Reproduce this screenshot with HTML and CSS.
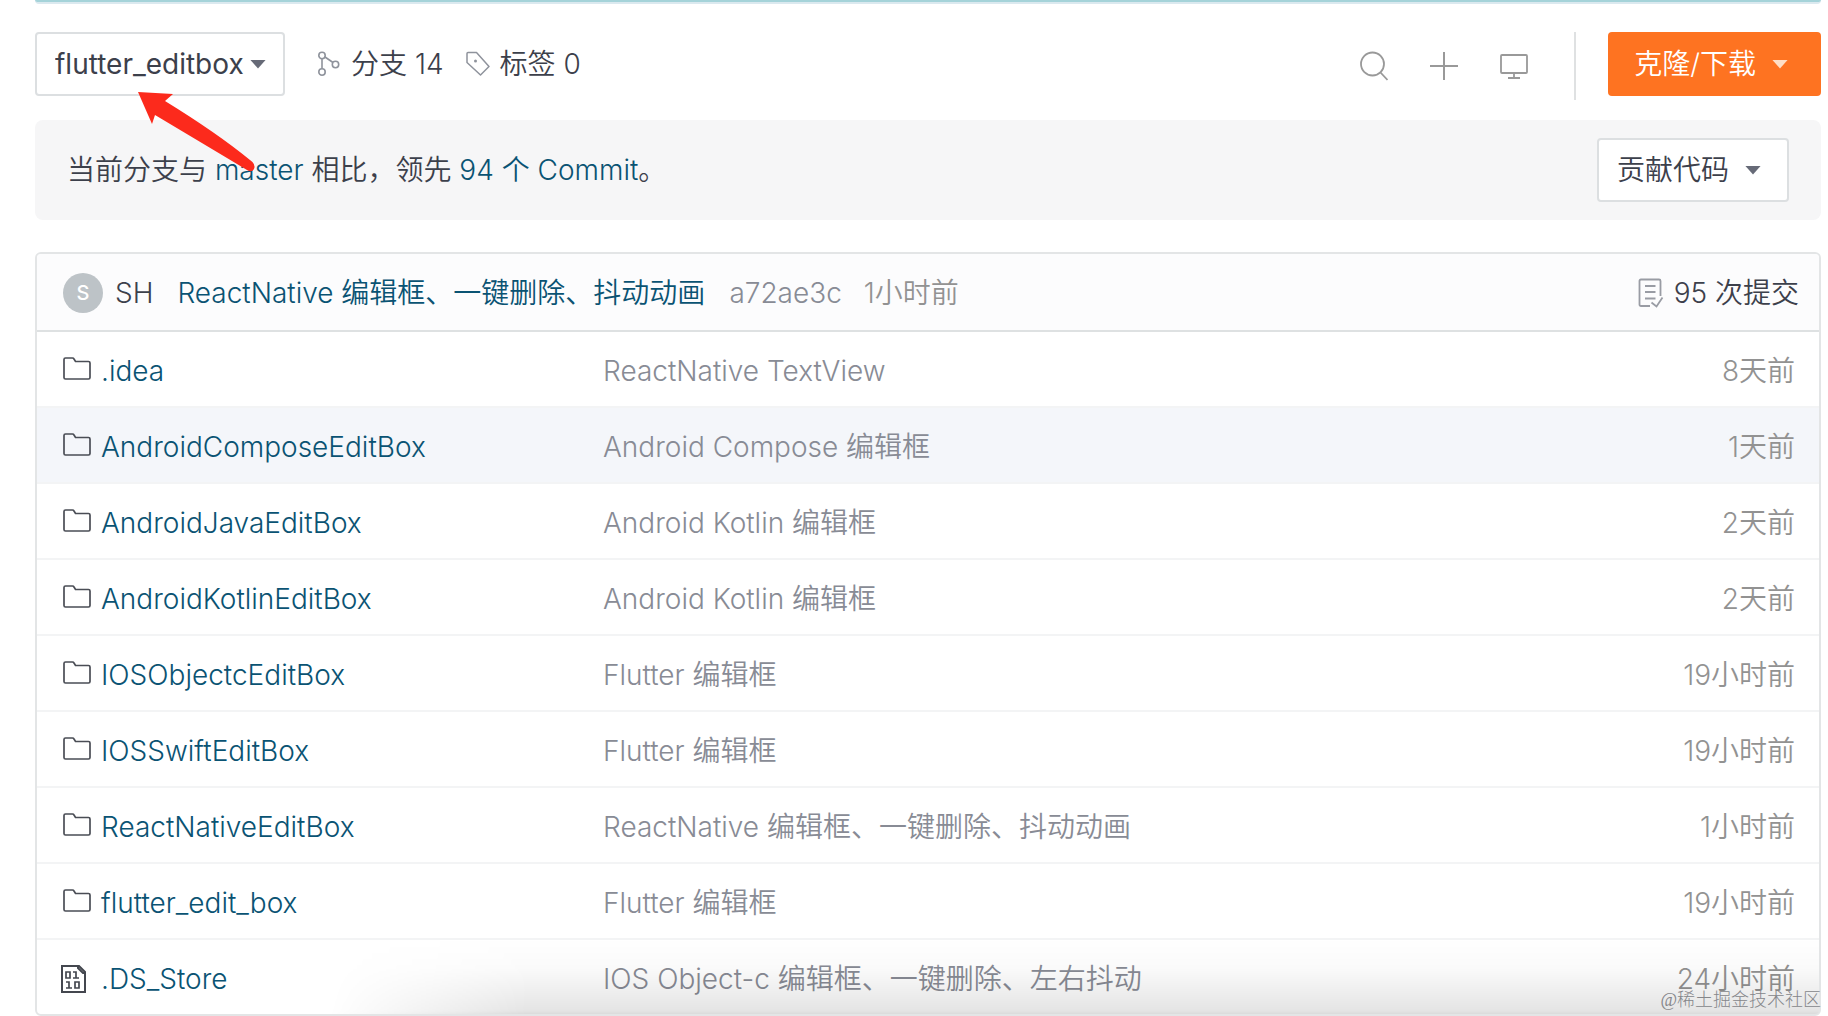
FILE: index.html
```html
<!DOCTYPE html>
<html lang="zh-CN">
<head>
<meta charset="utf-8">
<meta name="viewport" content="width=device-width, initial-scale=1">
<title>flutter_editbox</title>
<link rel="stylesheet" href="styles.css">
</head>
<body>
<svg class="sprite" aria-hidden="true">
  <symbol id="folder" viewBox="0 0 28 24"><path d="M1 20.500V2.500Q1 1 2.500 1H9.500Q10.500 1 11 2L12.500 4.500H25.500Q27 4.500 27 6V20.500Q27 22 25.500 22H2.500Q1 22 1 20.500Z" fill="none" stroke="#4a4d55" stroke-width="1.700"/></symbol>
</svg>
<div class="page">
  <div class="strip"></div>
  <header class="toolbar">
    <label class="branch">
      <select class="branch-select" aria-label="分支"><option>flutter_editbox</option></select>
      <span class="caret"></span>
    </label>
    <nav class="counts">
      <a class="count" href="#branches">
        <svg width="24" height="28" viewBox="0 0 24 28" fill="none" stroke="#8f939c" stroke-width="1.600"><circle cx="5" cy="5.500" r="3.200"/><circle cx="5" cy="22" r="3.200"/><circle cx="18.500" cy="14.500" r="3.200"/><path d="M5 9v9.500M8 7l8 5.500"/></svg>
        <span>分支 14</span>
      </a>
      <a class="count" href="#tags">
        <svg width="24" height="28" viewBox="0 0 24 28" fill="none" stroke="#8f939c" stroke-width="1.500"><path d="M1 3.500Q1 2.500 2 2.500H10.500L23 16.500L14.500 25L1 12.500Z" stroke-linejoin="round"/><circle cx="9.500" cy="11" r="1.500" fill="#8f939c" stroke="none"/></svg>
        <span>标签 0</span>
      </a>
    </nav>
    <div class="tools">
      <button class="tool" aria-label="搜索"><svg width="28" height="30" viewBox="0 0 28 30" fill="none" stroke="#999" stroke-width="1.800"><circle cx="12.500" cy="13" r="11.500"/><path d="M20.500 21.500L27.500 29"/></svg></button>
      <button class="tool" aria-label="新建"><svg width="28" height="30" viewBox="0 0 28 30" fill="none" stroke="#999" stroke-width="2"><path d="M0 15H28M14 1V29"/></svg></button>
      <button class="tool" aria-label="Web IDE"><svg width="28" height="30" viewBox="0 0 28 30" fill="none" stroke="#999" stroke-width="1.800"><rect x="1" y="4" width="26" height="18" rx="1"/><path d="M14 22v4.500M8 27H20"/></svg></button>
    </div>
    <span class="divider"></span>
    <button class="clone">克隆/下载<span class="caret"></span></button>
  </header>

  <section class="notice">
    <p class="notice-text">当前分支与 <a href="#master">master</a> 相比，领先 <a href="#compare">94 个 Commit</a>。</p>
    <button class="contribute">贡献代码<span class="caret"></span></button>
  </section>

  <section class="files">
    <div class="commit">
      <span class="avatar">S</span>
      <span class="author">SH</span>
      <a class="subject" href="#commit">ReactNative 编辑框、一键删除、抖动动画</a>
      <span class="hash">a72ae3c</span>
      <span class="age">1小时前</span>
      <a class="total" href="#commits">
        <svg width="26" height="30" viewBox="0 0 26 30" fill="none" stroke="#999ca4" stroke-width="1.800"><path d="M12 28H3Q1.500 28 1.500 26.500V3Q1.500 1.500 3 1.500H21Q22.500 1.500 22.500 3V18M7 8H17.500M7 14H17.500M7 20.500H17.500M13.500 24.500L18.500 28.500L24.500 19.500"/></svg>
        <span>95 次提交</span>
      </a>
    </div>
    <table class="tree">
      <colgroup><col class="col-name"><col class="col-message"><col class="col-age"></colgroup>
      <tbody>
        <tr><td><a class="entry" href="#f1"><svg class="icon"><use href="#folder"/></svg>.idea</a></td><td>ReactNative TextView</td><td>8天前</td></tr>
        <tr class="active"><td><a class="entry" href="#f2"><svg class="icon"><use href="#folder"/></svg>AndroidComposeEditBox</a></td><td>Android Compose 编辑框</td><td>1天前</td></tr>
        <tr><td><a class="entry" href="#f3"><svg class="icon"><use href="#folder"/></svg>AndroidJavaEditBox</a></td><td>Android Kotlin 编辑框</td><td>2天前</td></tr>
        <tr><td><a class="entry" href="#f4"><svg class="icon"><use href="#folder"/></svg>AndroidKotlinEditBox</a></td><td>Android Kotlin 编辑框</td><td>2天前</td></tr>
        <tr><td><a class="entry" href="#f5"><svg class="icon"><use href="#folder"/></svg>IOSObjectcEditBox</a></td><td>Flutter 编辑框</td><td>19小时前</td></tr>
        <tr><td><a class="entry" href="#f6"><svg class="icon"><use href="#folder"/></svg>IOSSwiftEditBox</a></td><td>Flutter 编辑框</td><td>19小时前</td></tr>
        <tr><td><a class="entry" href="#f7"><svg class="icon"><use href="#folder"/></svg>ReactNativeEditBox</a></td><td>ReactNative 编辑框、一键删除、抖动动画</td><td>1小时前</td></tr>
        <tr><td><a class="entry" href="#f8"><svg class="icon"><use href="#folder"/></svg>flutter_edit_box</a></td><td>Flutter 编辑框</td><td>19小时前</td></tr>
        <tr><td><a class="entry" href="#f9"><svg class="icon icon-file" viewBox="0 0 26 28" fill="none" stroke="#44474f"><path stroke-width="2" d="M1 1H18L24 7V27H1Z"/><path stroke-width="2" d="M17 1V3L22 8H24"/><path stroke-width="1.700" d="M5 7H9V13H5ZM12 7H15V13M12 13H18M5 17H8V23M5 23H11M14 17H18V23H14Z"/></svg>.DS_Store</a></td><td>IOS Object-c 编辑框、一键删除、左右抖动</td><td>24小时前</td></tr>
      </tbody>
    </table>
    <div class="shade"></div>
  </section>
  <svg class="arrow" width="120" height="84" viewBox="0 0 120 84" aria-hidden="true"><path d="M1 1L36 3L28 10Q80 42 113 69Q119 73 117 78Q115 82 110 79Q75 58 18 24L15 33Z" fill="#fc2a1c"/></svg>
  <span class="watermark">@稀土掘金技术社区</span>
</div>
</body>
</html>
```
FILE: styles.css
```css
* { box-sizing: border-box; }

body {
  margin: 0;
  background: #fff;
  color: #3c404b;
  font: 350 28px/40px Inter, "Noto Sans CJK SC", sans-serif;
}

a { color: inherit; text-decoration: none; }

button, select {
  margin: 0;
  font: inherit;
  color: inherit;
  cursor: pointer;
}

.sprite { position: absolute; width: 0; height: 0; }

.page { position: relative; padding: 0 7px 0 35px; }

.strip {
  height: 4px;
  background: #a5d3d9;
  border-bottom: 2px solid #dbe9ef;
  border-radius: 0 0 4px 4px;
}

.caret {
  width: 16px;
  height: 9px;
  background: #666a77;
  clip-path: polygon(0 0, 100% 0, 50% 100%);
}

.toolbar {
  display: flex;
  align-items: flex-start;
  margin-bottom: 20px;
  padding-top: 28px;
}

.branch {
  display: grid;
  align-items: center;
}

.branch > * { grid-area: 1 / 1; }

.branch .caret { justify-self: end; margin-right: 19px; pointer-events: none; }

.branch-select {
  appearance: none;
  height: 64px;
  padding: 0 39px 0 18px;
  border: 2px solid #dcdfe1;
  border-radius: 4px;
  background: #fff;
  font-weight: 400;
}

.counts { display: flex; gap: 22px; height: 64px; margin-left: 32px; }

.count { display: flex; align-items: center; gap: 10px; }

.tools { display: flex; align-items: center; gap: 42px; height: 68px; margin-left: auto; }

.tool {
  display: flex;
  padding: 0;
  border: 0;
  background: none;
}

.divider { width: 2px; height: 68px; margin: 0 32px 0 46px; background: #dfe1e2; }

.clone, .contribute {
  display: flex;
  align-items: center;
  gap: 16px;
  height: 64px;
  border-radius: 4px;
}

.clone {
  padding: 0 33px 0 26px;
  border: 0;
  background: #fe7321;
  color: #fff;
}

.clone .caret { background: #ffdfc5; }

.notice {
  display: flex;
  align-items: center;
  justify-content: space-between;
  height: 100px;
  padding: 0 32px;
  border-radius: 8px;
  background: #f6f6f7;
}

.notice-text { margin: 0; }

.notice-text a, .subject, .entry { color: #0a5373; }

.contribute {
  padding: 0 26px 0 18px;
  border: 2px solid #dcdfe1;
  background: #fff;
}

.files {
  position: relative;
  margin-top: 32px;
  border: 2px solid #e3e5e6;
  border-radius: 6px;
  overflow: hidden;
}

.commit {
  display: flex;
  align-items: center;
  height: 78px;
  padding: 2px 20px 0 26px;
  border-bottom: 2px solid #dee1e2;
  background: #fcfcfd;
}

.avatar {
  width: 40px;
  height: 40px;
  margin-right: 12px;
  border-radius: 50%;
  background: #bdc3c7;
  color: #fff;
  font-size: 20px;
  font-weight: 500;
  text-align: center;
}

.author { margin-right: 24px; }

.hash { margin: 0 22px 0 24px; color: #888b95; }

.age { color: #929292; }

.total { display: flex; align-items: center; gap: 10px; margin-left: auto; }

.tree {
  width: 100%;
  table-layout: fixed;
  border-spacing: 0;
}

.col-name { width: 566px; }
.col-age { width: 240px; }

.tree td {
  height: 76px;
  padding: 3px 0 0;
  border-bottom: 2px solid #f3f4f5;
  color: #888b95;
  white-space: nowrap;
}

.tree td:first-child { padding-left: 26px; }

.tree td:last-child {
  padding-right: 24px;
  color: #929292;
  text-align: right;
}

.tree tr:last-child td { height: 74px; border-bottom: 0; }

.active td { background: #f4f6fa; }

.entry { display: flex; align-items: center; gap: 10px; }

.icon { flex: none; width: 28px; height: 24px; margin-bottom: 4px; }

.icon-file { width: 26px; height: 28px; margin: 0 4px 0 -2px; }

.shade {
  position: absolute;
  inset: auto 0 0 0;
  height: 76px;
  background: linear-gradient(to bottom, transparent, rgba(0, 0, 0, 0.020) 40%, rgba(0, 0, 0, 0.100) 95%, rgba(0, 0, 0, 0.140));
  mask-image: linear-gradient(100deg, transparent 17%, #000 28%);
  pointer-events: none;
}

.arrow {
  position: absolute;
  left: 137px;
  top: 91px;
  pointer-events: none;
}

.watermark {
  position: absolute;
  right: 7px;
  bottom: 4px;
  color: #85868a;
  font: 300 18px/24px "Liberation Serif", "Noto Sans CJK SC", serif;
}
```
